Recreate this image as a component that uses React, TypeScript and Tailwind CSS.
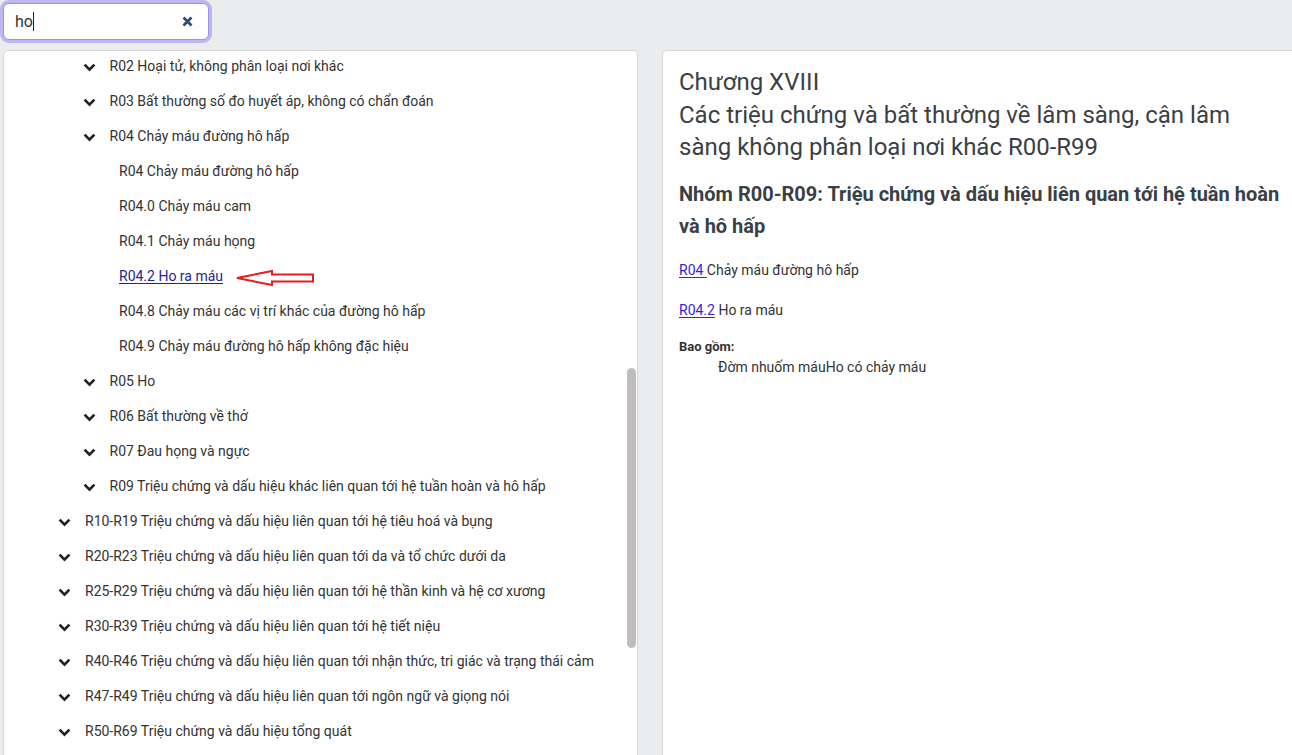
import React from "react";

const Chevron = () => (
  <svg width="13" height="9" viewBox="0 0 13 9" className="shrink-0 mt-[3px]">
    <path d="M1.6 1.6 L6.5 6.6 L11.4 1.6" fill="none" stroke="#222" strokeWidth="2.7" strokeLinecap="butt" strokeLinejoin="miter" />
  </svg>
);

type Row = { level: 1 | 2 | 3; text: string; link?: boolean; arrow?: boolean };

const rows: Row[] = [
  { level: 2, text: "R02 Hoại tử, không phân loại nơi khác" },
  { level: 2, text: "R03 Bất thường số đo huyết áp, không có chẩn đoán" },
  { level: 2, text: "R04 Chảy máu đường hô hấp" },
  { level: 3, text: "R04 Chảy máu đường hô hấp" },
  { level: 3, text: "R04.0 Chảy máu cam" },
  { level: 3, text: "R04.1 Chảy máu họng" },
  { level: 3, text: "R04.2 Ho ra máu", link: true, arrow: true },
  { level: 3, text: "R04.8 Chảy máu các vị trí khác của đường hô hấp" },
  { level: 3, text: "R04.9 Chảy máu đường hô hấp không đặc hiệu" },
  { level: 2, text: "R05 Ho" },
  { level: 2, text: "R06 Bất thường về thở" },
  { level: 2, text: "R07 Đau họng và ngực" },
  { level: 2, text: "R09 Triệu chứng và dấu hiệu khác liên quan tới hệ tuần hoàn và hô hấp" },
  { level: 1, text: "R10-R19 Triệu chứng và dấu hiệu liên quan tới hệ tiêu hoá và bụng" },
  { level: 1, text: "R20-R23 Triệu chứng và dấu hiệu liên quan tới da và tổ chức dưới da" },
  { level: 1, text: "R25-R29 Triệu chứng và dấu hiệu liên quan tới hệ thần kinh và hệ cơ xương" },
  { level: 1, text: "R30-R39 Triệu chứng và dấu hiệu liên quan tới hệ tiết niệu" },
  { level: 1, text: "R40-R46 Triệu chứng và dấu hiệu liên quan tới nhận thức, tri giác và trạng thái cảm" },
  { level: 1, text: "R47-R49 Triệu chứng và dấu hiệu liên quan tới ngôn ngữ và giọng nói" },
  { level: 1, text: "R50-R69 Triệu chứng và dấu hiệu tổng quát" },
];

const RedArrow = () => (
  <svg width="80" height="18" viewBox="0 0 80 18" className="ml-[12px] mt-[3px] shrink-0">
    <polygon
      points="2,9 37,2 37,5.5 78,5.5 78,12.5 37,12.5 37,16"
      fill="#fff"
      stroke="#e81c1c"
      strokeWidth="2"
      strokeLinejoin="miter"
    />
  </svg>
);

export default function App() {
  return (
    <div
      className="w-[1292px] h-[755px] overflow-hidden bg-[#ebecee] text-[#333]"
      style={{ fontFamily: "Roboto, 'Noto Sans', Arial, sans-serif" }}
    >
      <div className="pt-[3px] pl-[3px] h-[50px]">
        <div className="w-[206px] h-[37px] bg-white rounded-[6px] ring-[3px] ring-[#bcb6f1] border border-[#9a92e8] flex items-center pl-[11px] pr-[15px]">
          <span className="text-[16px] text-[#333] leading-none">ho</span>
          <span className="w-[1px] h-[19px] bg-[#222] ml-[0px]" />
          <div className="flex-1" />
          <svg width="11" height="11" viewBox="0 0 11 11">
            <path d="M1.5 1.5 L9.5 9.5 M9.5 1.5 L1.5 9.5" stroke="#2b4a77" strokeWidth="2.6" />
          </svg>
        </div>
      </div>
      <div className="flex gap-[24px] pl-[3px]">
        <div className="w-[635px] shrink-0 h-[720px] bg-white border border-[#d6d6d8] rounded-t-[5px] relative overflow-hidden">
          <div className="-mt-[2.5px]">
            {rows.map((r, i) => (
              <div
                key={i}
                className={
                  "h-[35px] flex items-center text-[14px] whitespace-nowrap " +
                  (r.level === 1 ? "pl-[54px]" : r.level === 2 ? "pl-[79px]" : "pl-[115px]")
                }
              >
                {r.level !== 3 && <Chevron />}
                <span
                  className={
                    (r.level === 1 ? "ml-[14px] " : r.level === 2 ? "ml-[13.5px] " : "") +
                    (r.link ? "text-[#27238f] underline underline-offset-[2px]" : "text-[#333]")
                  }
                >
                  {r.text}
                </span>
                {r.arrow && <RedArrow />}
              </div>
            ))}
          </div>
          <div className="absolute left-[623px] top-[317px] w-[9px] h-[280px] rounded-full bg-[#c1bdbd]" />
        </div>
        <div className="w-[640px] shrink-0 h-[720px] bg-white border border-[#d6d6d8] rounded-t-[5px] pl-[16px] pr-[18px] pt-[15px]">
          <h2 className="text-[24px] leading-[32.5px] text-[#3a3f45] font-normal">
            Chương XVIII
            <br />
            Các triệu chứng và bất thường về lâm sàng, cận lâm sàng không phân loại nơi khác R00-R99
          </h2>
          <h3 className="mt-[14px] text-[20px] leading-[32px] font-bold text-[#3a3f45]">
            Nhóm R00-R09: Triệu chứng và dấu hiệu liên quan tới hệ tuần hoàn và hô hấp
          </h3>
          <p className="mt-[18px] text-[14px] leading-[20px]">
            <span className="text-[#3b22d9] underline underline-offset-[2px]">R04 </span>Chảy máu đường hô hấp
          </p>
          <p className="mt-[20px] text-[14px] leading-[20px]">
            <span className="text-[#3b22d9] underline underline-offset-[2px]">R04.2</span> Ho ra máu
          </p>
          <p className="mt-[17px] text-[13px] leading-[20px] font-bold text-[#333]">Bao gồm:</p>
          <p className="pl-[39px] text-[14px] leading-[20px]">Đờm nhuốm máuHo có chảy máu</p>
        </div>
      </div>
    </div>
  );
}
